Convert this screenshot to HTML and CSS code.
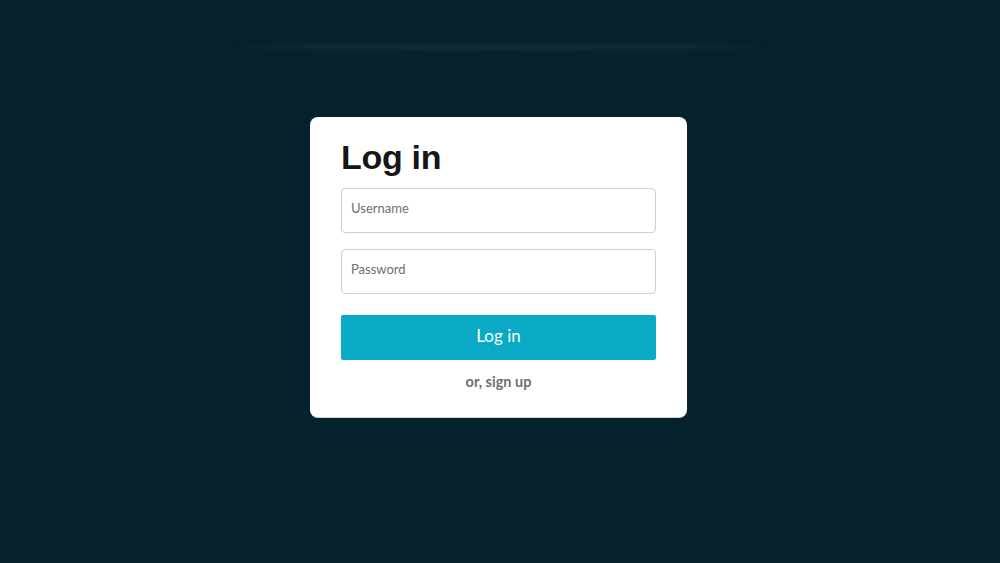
FILE: index.html
```html
<!DOCTYPE html>
<html>
<head>
<meta charset="utf-8">
<link rel="stylesheet" href="styles.css">
</head>
<body>
<div class="glow"></div>
<main class="stage">
  <form class="card">
    <h1 class="title">Log in</h1>
    <div class="field"><span class="ph">Username</span></div>
    <div class="field"><span class="ph">Password</span></div>
    <div class="btn">Log in</div>
    <div class="alt">or, sign up</div>
  </form>
</main>
</body>
</html>
```
FILE: styles.css
```css
html, body {
  margin: 0;
  padding: 0;
  width: 1000px;
  height: 563px;
  overflow: hidden;
  background: #05212b;
  font-family: Lato, "Open Sans", sans-serif;
}
.glow {
  position: absolute;
  left: 230px;
  top: 43px;
  width: 540px;
  height: 7px;
  background: linear-gradient(90deg, rgba(255,255,255,0) 0%, rgba(110,130,140,0.10) 15%, rgba(110,130,140,0.12) 50%, rgba(110,130,140,0.10) 85%, rgba(255,255,255,0) 100%);
  filter: blur(2px);
}
.stage {
  display: flex;
  justify-content: center;
  padding-top: 117px;
}
.card {
  box-sizing: border-box;
  width: 377px;
  height: 301px;
  margin-left: -3px;
  background: #fff;
  border-radius: 8px;
  border-bottom: 1px solid #cfd3d5;
  padding: 20px 31px 0 31px;
  display: flex;
  flex-direction: column;
}
.title {
  margin: 0;
  font-family: "Liberation Sans", Arial, sans-serif;
  font-weight: 700;
  font-size: 34px;
  line-height: 40px;
  color: #161616;
  letter-spacing: -0.3px;
}
.field {
  box-sizing: border-box;
  height: 45px;
  border: 1px solid #cfcfcf;
  border-radius: 4px;
  padding: 0 9px;
  display: flex;
  align-items: center;
  margin-top: 11px;
}
.field + .field {
  margin-top: 16px;
}
.ph {
  font-size: 13px;
  color: #6f6f6f;
  position: relative;
  top: -3px;
}
.btn {
  margin-top: 21px;
  height: 45px;
  background: #0aa9c5;
  border-radius: 2px;
  color: #fff;
  font-size: 17px;
  display: flex;
  align-items: center;
  justify-content: center;
  padding-bottom: 4px;
  box-sizing: border-box;
}
.alt {
  margin-top: 13px;
  text-align: center;
  font-size: 14.5px;
  font-weight: 700;
  color: #6e6e6e;
  line-height: 18px;
}
```
